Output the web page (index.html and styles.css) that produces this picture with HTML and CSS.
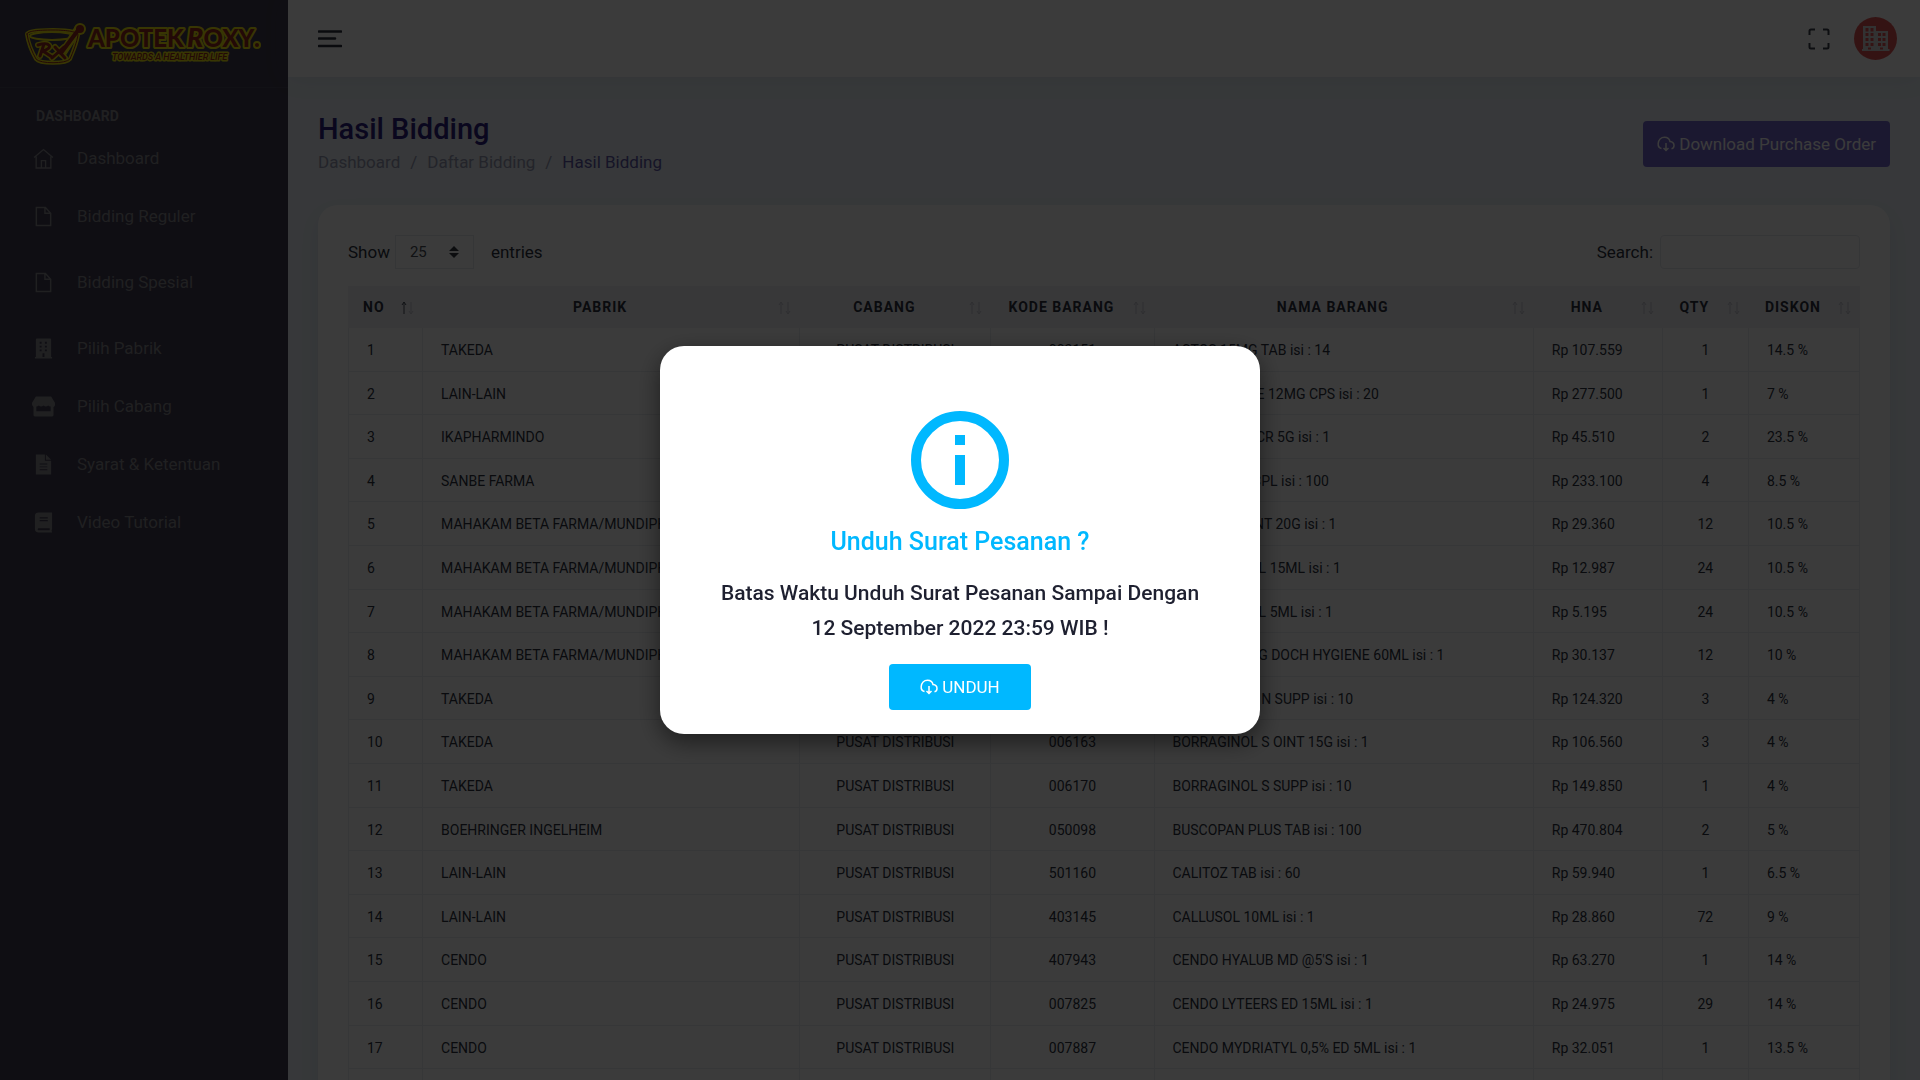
FILE: index.html
```html
<!DOCTYPE html>
<html lang="id">
<head>
<meta charset="utf-8">
<title>Hasil Bidding</title>
<link rel="stylesheet" href="styles.css">
</head>
<body>
<svg class="sprite" aria-hidden="true">
  <symbol id="i-home" viewBox="0 0 20 20"><path d="M1 9l9-7.500L19 9M3 8v11h14V8M8 19v-7h4v7" fill="none" stroke="currentColor" stroke-width="1.300"/></symbol>
  <symbol id="i-file" viewBox="0 0 18 22"><path d="M1.500 1.500h9.500l5.500 6v13h-15zM10.500 1.500v6h6" fill="none" stroke="currentColor" stroke-width="1.500"/></symbol>
  <symbol id="i-building" viewBox="0 0 18 22"><path fill="currentColor" fill-rule="evenodd" d="M2 .5h14q1 0 1 1V20h1v1.500H0V20h1V1.500q0-1 1-1zM5 4v2h2V4zm5.500 0v2h2V4zM5 8v2h2V8zm5.500 0v2h2V8zM5 12v2h2v-2zm5.500 0v2h2v-2zM8 16v4h2v-4z"/></symbol>
  <symbol id="i-store" viewBox="0 0 25 22"><path fill="currentColor" fill-rule="evenodd" d="M4.500.5h16L24.500 7q.5 4-1.500 4.500V20q0 1.500-1.500 1.500h-18Q2 21.500 2 20v-8.500Q-.2 10 .5 7zM5 11v5h15v-5q-2 0-2.500-1-2.500 2-5 0-2.500 2-5 0-1 1-2.500 1z"/></symbol>
  <symbol id="i-doc" viewBox="0 0 18 22"><path fill="currentColor" fill-rule="evenodd" d="M1 .5h9.500V7H17v14.500H1zM5 10v1h8v-1zm0 3v1h8v-1zm0 3v1h8v-1zM11.500.5L17 6h-5.500z"/></symbol>
  <symbol id="i-book" viewBox="0 0 18 22"><path fill="currentColor" fill-rule="evenodd" d="M4 .5h14v17l-.5 2 .5 2H4q-4 0-4-4V4Q0 .5 4 .5zM5 5.500v1.300h8.500V5.500zm0 3v1.300h8.500V8.500zM3.500 17q-1.500 1 0 2h12v-2z"/></symbol>
  <symbol id="i-cloud" viewBox="0 0 18 16"><path d="M4.500 12.500C2 12 1 10 1.200 7.500 1.500 4 4 1.200 7.500 1.200c3 0 5 1.800 5.500 4.300 2.500.2 4 1.800 4 4 0 1.700-1 3-2.500 3.300M9 7v7.500M6.500 12L9 14.500l2.500-2.500" fill="none" stroke="currentColor" stroke-width="1.500"/></symbol>
  <symbol id="i-sort" viewBox="0 0 14 14"><path d="M4 13V1M2 4l2-3 2 3" fill="none" stroke="currentColor"/><path d="M11 1v12M9 10l2 3 2-3" fill="none" stroke="#c9c9d2"/></symbol>
</svg>

<div class="layout">
  <aside class="sidebar">
    <a class="brand" href="#" aria-label="Apotek Roxy">
      <svg class="logo" viewBox="0 0 240 42" role="img">
        <g fill="none" stroke="#f2ea10" stroke-linejoin="round" stroke-linecap="round">
          <path stroke-width="4" d="M3 11C3 8 14 7 29 7s25 2 25 5c-1 7-5 17-8 24-4 5-30 5-34 0C8 29 4 19 3 11z"/>
          <ellipse cx="28" cy="13" rx="22" ry="4" stroke-width="2"/>
          <path stroke-width="8" d="M54 6L38 31"/>
          <path stroke-width="6" d="M16 33l4-12M14 22c12-4 16 3 5 6l9 6M31 24l10 11M40 24l-12 11"/>
        </g>
        <circle cx="56" cy="6" r="6" fill="#f2ea10"/>
        <g fill="none" stroke="#96281e" stroke-linecap="round">
          <path stroke-width="1" d="M3 11C3 8 14 7 29 7s25 2 25 5c-1 7-5 17-8 24-4 5-30 5-34 0C8 29 4 19 3 11z"/>
          <path stroke-width="4" d="M55 6L37 30"/>
          <path stroke-width="3" d="M16 33l4-12M14 22c12-4 16 3 5 6l9 6M31 24l10 11M40 24l-12 11"/>
        </g>
        <circle cx="56" cy="6" r="4" fill="#96281e"/>
        <text class="logo-name" x="64" y="24">APOTEK</text>
        <text class="logo-name" x="163" y="24"><tspan class="logo-r">R</tspan>OXY</text>
        <circle cx="233" cy="22" r="3" fill="#96281e" stroke="#f2ea10" stroke-width="2"/>
        <text class="logo-tag" x="88" y="37">TOWARDS A HEALTHIER LIFE</text>
      </svg>
    </a>
    <nav class="menu">
      <h2 class="menu-title">DASHBOARD</h2>
      <a class="item" href="#"><svg class="ico"><use href="#i-home"/></svg>Dashboard</a>
      <a class="item spaced" href="#"><svg class="ico"><use href="#i-file"/></svg>Bidding Reguler</a>
      <a class="item spaced" href="#"><svg class="ico"><use href="#i-file"/></svg>Bidding Spesial</a>
      <a class="item" href="#"><svg class="ico"><use href="#i-building"/></svg>Pilih Pabrik</a>
      <a class="item" href="#"><svg class="ico"><use href="#i-store"/></svg>Pilih Cabang</a>
      <a class="item" href="#"><svg class="ico"><use href="#i-doc"/></svg>Syarat &amp; Ketentuan</a>
      <a class="item" href="#"><svg class="ico"><use href="#i-book"/></svg>Video Tutorial</a>
    </nav>
  </aside>

  <div class="main">
    <header class="topbar">
      <button class="icon-btn" aria-label="Menu"><svg width="24" height="18" viewBox="0 0 24 18"><path d="M1 1.500h22M1 8.500h16M1 16h22" stroke="#2c323f" stroke-width="2.600" stroke-linecap="round"/></svg></button>
      <div class="tools">
        <button class="icon-btn" aria-label="Layar penuh"><svg width="22" height="22" viewBox="0 0 22 22"><path d="M1.500 7V3q0-1.500 1.500-1.500h4M15 1.500h4q1.500 0 1.500 1.500v4M20.500 15v4q0 1.500-1.500 1.500h-4M7 20.500H3q-1.500 0-1.500-1.500v-4" fill="none" stroke="#3a3f4a" stroke-width="2"/></svg></button>
        <button class="icon-btn" aria-label="Profil"><svg width="43" height="43" viewBox="0 0 43 43"><circle cx="21.500" cy="21.500" r="21.500" fill="#e25555"/><path fill="#d8d8d8" fill-rule="evenodd" d="M9 9h13v5h12v18h1.500v2H8v-2h1zM11.500 11v3.500h3V11zm5 0v3.500h3V11zm-5 5v3h3v-3zm5 0v3h3v-3zm-5 5v3h3v-3zm5 0v3h3v-3zm-5 5v3h3v-3zm5 0v3h3v-3zM24 16v3h3v-3zm4.500 0v3h3v-3zM24 21v3h3v-3zm4.500 0v3h3v-3zM24 26v3h3v-3zm4.500 0v3h3v-3zM14 30.500v2h3v-2zm12 0v2h3v-2z"/></svg></button>
      </div>
    </header>

    <main class="content">
      <div class="page-head">
        <div>
          <h1>Hasil Bidding</h1>
          <nav class="crumbs"><a href="#">Dashboard</a><span>/</span><a href="#">Daftar Bidding</a><span>/</span><span class="current">Hasil Bidding</span></nav>
        </div>
        <button class="btn primary"><svg class="cloud"><use href="#i-cloud"/></svg>Download Purchase Order</button>
      </div>

      <section class="card">
        <div class="controls">
          <div class="length">
            <label for="len">Show</label>
            <span class="select-wrap"><select id="len"><option>25</option><option>50</option><option>100</option></select><svg class="caret" viewBox="0 0 10 12"><path d="M0 5l5-5 5 5zM0 7l5 5 5-5z" fill="#343a40"/></svg></span>
            <span>entries</span>
          </div>
          <div class="search"><label for="q">Search:</label><input id="q" type="search"></div>
        </div>
        <table>
          <colgroup><col class="c-no"><col class="c-pabrik"><col class="c-cabang"><col class="c-kode"><col class="c-nama"><col class="c-hna"><col class="c-qty"><col class="c-diskon"></colgroup>
          <thead><tr>
            <th class="sorted"><div>NO<svg class="sort"><use href="#i-sort"/></svg></div></th>
            <th><div>PABRIK<svg class="sort"><use href="#i-sort"/></svg></div></th>
            <th><div>CABANG<svg class="sort"><use href="#i-sort"/></svg></div></th>
            <th><div>KODE BARANG<svg class="sort"><use href="#i-sort"/></svg></div></th>
            <th><div>NAMA BARANG<svg class="sort"><use href="#i-sort"/></svg></div></th>
            <th><div>HNA<svg class="sort"><use href="#i-sort"/></svg></div></th>
            <th><div>QTY<svg class="sort"><use href="#i-sort"/></svg></div></th>
            <th><div>DISKON<svg class="sort"><use href="#i-sort"/></svg></div></th>
          </tr></thead>
          <tbody>
            <tr><td>1</td><td>TAKEDA</td><td>PUSAT DISTRIBUSI</td><td>003151</td><td>ACTOS 15MG TAB isi : 14</td><td>Rp 107.559</td><td>1</td><td>14.5 %</td></tr>
            <tr><td>2</td><td>LAIN-LAIN</td><td>PUSAT DISTRIBUSI</td><td></td><td>ASTHA-FORCE 12MG CPS isi : 20</td><td>Rp 277.500</td><td>1</td><td>7 %</td></tr>
            <tr><td>3</td><td>IKAPHARMINDO</td><td>PUSAT DISTRIBUSI</td><td></td><td>BENOSON M CR 5G isi : 1</td><td>Rp 45.510</td><td>2</td><td>23.5 %</td></tr>
            <tr><td>4</td><td>SANBE FARMA</td><td>PUSAT DISTRIBUSI</td><td></td><td>BECOM-ZET CPL isi : 100</td><td>Rp 233.100</td><td>4</td><td>8.5 %</td></tr>
            <tr><td>5</td><td>MAHAKAM BETA FARMA/MUNDIPHARMA</td><td>PUSAT DISTRIBUSI</td><td></td><td>BETADINE OINT 20G isi : 1</td><td>Rp 29.360</td><td>12</td><td>10.5 %</td></tr>
            <tr><td>6</td><td>MAHAKAM BETA FARMA/MUNDIPHARMA</td><td>PUSAT DISTRIBUSI</td><td></td><td>BETADINE SOL 15ML isi : 1</td><td>Rp 12.987</td><td>24</td><td>10.5 %</td></tr>
            <tr><td>7</td><td>MAHAKAM BETA FARMA/MUNDIPHARMA</td><td>PUSAT DISTRIBUSI</td><td></td><td>BETADINE SOL 5ML isi : 1</td><td>Rp 5.195</td><td>24</td><td>10.5 %</td></tr>
            <tr><td>8</td><td>MAHAKAM BETA FARMA/MUNDIPHARMA</td><td>PUSAT DISTRIBUSI</td><td></td><td>BETADINE VAG DOCH HYGIENE 60ML isi : 1</td><td>Rp 30.137</td><td>12</td><td>10 %</td></tr>
            <tr><td>9</td><td>TAKEDA</td><td>PUSAT DISTRIBUSI</td><td></td><td>BORRAGINOL N SUPP isi : 10</td><td>Rp 124.320</td><td>3</td><td>4 %</td></tr>
            <tr><td>10</td><td>TAKEDA</td><td>PUSAT DISTRIBUSI</td><td>006163</td><td>BORRAGINOL S OINT 15G isi : 1</td><td>Rp 106.560</td><td>3</td><td>4 %</td></tr>
            <tr><td>11</td><td>TAKEDA</td><td>PUSAT DISTRIBUSI</td><td>006170</td><td>BORRAGINOL S SUPP isi : 10</td><td>Rp 149.850</td><td>1</td><td>4 %</td></tr>
            <tr><td>12</td><td>BOEHRINGER INGELHEIM</td><td>PUSAT DISTRIBUSI</td><td>050098</td><td>BUSCOPAN PLUS TAB isi : 100</td><td>Rp 470.804</td><td>2</td><td>5 %</td></tr>
            <tr><td>13</td><td>LAIN-LAIN</td><td>PUSAT DISTRIBUSI</td><td>501160</td><td>CALITOZ TAB isi : 60</td><td>Rp 59.940</td><td>1</td><td>6.5 %</td></tr>
            <tr><td>14</td><td>LAIN-LAIN</td><td>PUSAT DISTRIBUSI</td><td>403145</td><td>CALLUSOL 10ML isi : 1</td><td>Rp 28.860</td><td>72</td><td>9 %</td></tr>
            <tr><td>15</td><td>CENDO</td><td>PUSAT DISTRIBUSI</td><td>407943</td><td>CENDO HYALUB MD @5'S isi : 1</td><td>Rp 63.270</td><td>1</td><td>14 %</td></tr>
            <tr><td>16</td><td>CENDO</td><td>PUSAT DISTRIBUSI</td><td>007825</td><td>CENDO LYTEERS ED 15ML isi : 1</td><td>Rp 24.975</td><td>29</td><td>14 %</td></tr>
            <tr><td>17</td><td>CENDO</td><td>PUSAT DISTRIBUSI</td><td>007887</td><td>CENDO MYDRIATYL 0,5% ED 5ML isi : 1</td><td>Rp 32.051</td><td>1</td><td>13.5 %</td></tr>
            <tr><td>&nbsp;</td><td></td><td></td><td></td><td></td><td></td><td></td><td></td></tr>
          </tbody>
        </table>
      </section>
    </main>
  </div>
</div>

<div class="backdrop">
  <div class="modal" role="dialog" aria-modal="true" aria-labelledby="dlg-title">
    <svg class="info" viewBox="0 0 98 98"><circle cx="49" cy="49" r="44" fill="none" stroke="currentColor" stroke-width="10"/><path fill="currentColor" d="M44 24h10v10H44zM44 44h10v30H44z"/></svg>
    <h2 id="dlg-title">Unduh Surat Pesanan ?</h2>
    <p>Batas Waktu Unduh Surat Pesanan Sampai Dengan<br>12 September 2022 23:59 WIB !</p>
    <button class="btn info-btn"><svg class="cloud"><use href="#i-cloud"/></svg>UNDUH</button>
  </div>
</div>
</body>
</html>
```
FILE: styles.css
```css
* { box-sizing: border-box; }

body {
  margin: 0;
  height: 100vh;
  overflow: hidden;
  font: 17px/24px Roboto, sans-serif;
  color: #2c323f;
  background: #ebf2f8;
}

h1, h2, p { margin: 0; }
a { color: inherit; text-decoration: none; }
button, input, select { font: inherit; }
.sprite { position: absolute; width: 0; height: 0; }

.layout { display: flex; min-height: 100vh; }

/* Sidebar */
.sidebar {
  flex: none;
  width: 288px;
  background: #413d52;
  color: #8a8a90;
}
.brand {
  display: flex;
  align-items: center;
  height: 88px;
  padding-left: 24px;
  border-bottom: 1px solid #4c495c;
}
.logo { width: 240px; height: 42px; overflow: visible; }
.logo-name {
  font: 900 24px Lato, sans-serif;
  fill: #96281e;
  stroke: #f2ea10;
  stroke-width: 4px;
  stroke-linejoin: round;
  paint-order: stroke;
}
.logo-r { font-style: italic; font-size: 27px; }
.logo-tag {
  font: italic 500 9px Roboto, sans-serif;
  fill: #96281e;
  stroke: #f2ea10;
  stroke-width: 3px;
  stroke-linejoin: round;
  paint-order: stroke;
}
.menu { display: flex; flex-direction: column; padding-top: 15px; }
.menu-title {
  padding-left: 36px;
  font-size: 14px;
  line-height: 26px;
  font-weight: 700;
}
.item {
  display: flex;
  align-items: center;
  gap: 20px;
  height: 58px;
  padding-left: 30px;
}
.spaced { margin-bottom: 8px; }
.ico { width: 27px; height: 21px; }

/* Top bar */
.main { flex: 1; min-width: 0; }
.topbar {
  display: flex;
  align-items: center;
  justify-content: space-between;
  height: 77px;
  padding: 0 23px 0 30px;
  background: #fff;
  box-shadow: 0 0 24px rgba(89, 102, 122, .1);
}
.tools { display: flex; align-items: center; gap: 24px; }
.icon-btn {
  display: flex;
  padding: 0;
  border: 0;
  background: none;
}

/* Page heading */
.content { padding: 32px 30px; }
.page-head {
  display: flex;
  align-items: center;
  justify-content: space-between;
  height: 70px;
}
h1 { font-size: 29px; line-height: 36px; font-weight: 500; color: #2b2180; }
.crumbs { display: flex; gap: 10px; line-height: 30px; color: #989bb5; }
.current { color: #6259a8; }
.btn {
  display: flex;
  align-items: center;
  gap: 4px;
  height: 46px;
  border: 0;
  border-radius: 4px;
  color: #fff;
}
.cloud { width: 18px; height: 16px; }
.primary { padding: 0 14px; background: #7567cf; }

/* Table card */
.card {
  margin-top: 26px;
  padding: 30px;
  border-radius: 20px;
  background: #fff;
  box-shadow: 0 9px 20px rgba(46, 35, 94, .07);
}
.controls {
  display: flex;
  justify-content: space-between;
  height: 34px;
  margin-bottom: 17px;
}
.length, .search { display: flex; align-items: center; }
.length { gap: 5px; }
.select-wrap { display: flex; position: relative; margin-right: 12px; }
select {
  width: 79px;
  height: 34px;
  padding: 0 14px;
  appearance: none;
  border: 1px solid #e6e9ee;
  background: #fff;
  color: #495057;
  font-size: 15px;
}
.caret { position: absolute; right: 15px; top: 11px; width: 10px; height: 12px; }
.search { gap: 7px; }
.search input {
  width: 200px;
  height: 34px;
  appearance: none;
  border: 1px solid #e6e9ee;
  border-radius: 4px;
  background: #fff;
}

table {
  width: 100%;
  table-layout: fixed;
  border-spacing: 0;
  font-size: 14px;
  line-height: 1.4;
}
.c-no { width: 75px; }
.c-pabrik { width: 377px; }
.c-cabang { width: 191px; }
.c-kode { width: 163px; }
.c-nama { width: 379px; }
.c-hna { width: 129px; }
.c-qty { width: 86px; }
.c-diskon { width: 111px; }
th {
  height: 42px;
  padding: 2px 9px 0 15px;
  background: #f1f1f7;
  font-weight: 700;
  letter-spacing: 1px;
}
th div {
  display: grid;
  grid-template-columns: 1fr 14px;
  column-gap: 15px;
  align-items: center;
}
.sort { width: 14px; height: 14px; color: #c9c9d2; }
.sorted { text-align: left; }
.sorted .sort { color: #4a505c; }
td {
  padding: 13px 18px 10px;
  border-right: 1px solid #e9ebef;
  border-bottom: 1px solid #e9ebef;
  white-space: nowrap;
  overflow: hidden;
}
td:first-child { border-left: 1px solid #e9ebef; }
td:nth-child(3), td:nth-child(4), td:nth-child(7) { text-align: center; }

/* Dialog */
.backdrop {
  position: fixed;
  inset: 0;
  display: flex;
  align-items: center;
  justify-content: center;
  background: rgba(0, 0, 0, .77);
}
.modal {
  display: flex;
  flex-direction: column;
  align-items: center;
  width: 600px;
  padding: 65px 24px 24px;
  border-radius: 24px;
  background: #fff;
  box-shadow: 0 8px 24px rgba(0, 0, 0, .5);
  text-align: center;
}
.info { width: 98px; height: 98px; color: #00b8ff; }
.modal h2 {
  margin-top: 17px;
  font-size: 25px;
  line-height: 32px;
  font-weight: 500;
  color: #00b8ff;
}
.modal p {
  margin-top: 18px;
  font-size: 21px;
  line-height: 35px;
  font-weight: 500;
  color: #1e2030;
}
.info-btn { margin-top: 18px; padding: 0 31px; background: #00b8ff; }
```
